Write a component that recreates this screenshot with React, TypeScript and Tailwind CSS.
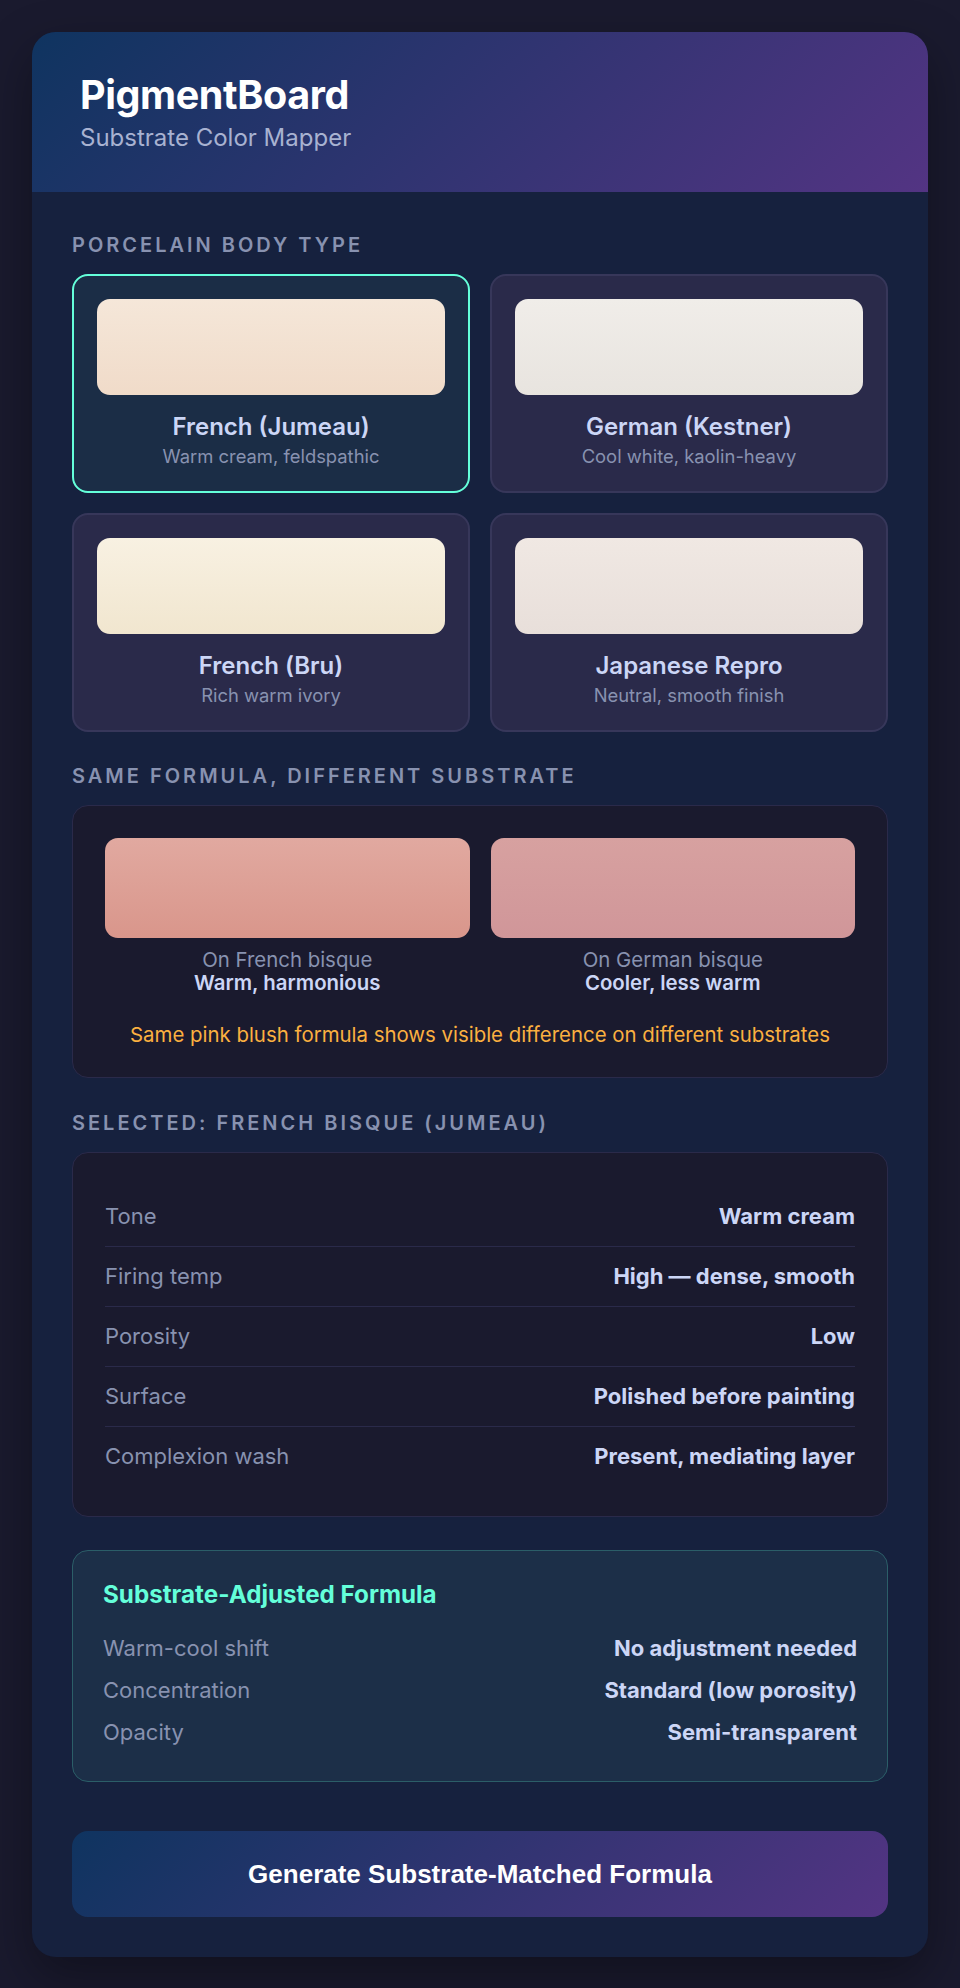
import { useState } from "react";

type Body = {
  id: string;
  name: string;
  desc: string;
  swatch: string;
};

const bodies: Body[] = [
  {
    id: "jumeau",
    name: "French (Jumeau)",
    desc: "Warm cream, feldspathic",
    swatch: "bg-[linear-gradient(180deg,#f5e7d9,#f0dbc9)]",
  },
  {
    id: "kestner",
    name: "German (Kestner)",
    desc: "Cool white, kaolin-heavy",
    swatch: "bg-[linear-gradient(180deg,#f0ede9,#e8e4df)]",
  },
  {
    id: "bru",
    name: "French (Bru)",
    desc: "Rich warm ivory",
    swatch: "bg-[linear-gradient(180deg,#f8f1e2,#f1e6cf)]",
  },
  {
    id: "japanese",
    name: "Japanese Repro",
    desc: "Neutral, smooth finish",
    swatch: "bg-[linear-gradient(180deg,#f0e8e3,#e8dfda)]",
  },
];

const details = [
  ["Tone", "Warm cream"],
  ["Firing temp", "High — dense, smooth"],
  ["Porosity", "Low"],
  ["Surface", "Polished before painting"],
  ["Complexion wash", "Present, mediating layer"],
];

const formula = [
  ["Warm-cool shift", "No adjustment needed"],
  ["Concentration", "Standard (low porosity)"],
  ["Opacity", "Semi-transparent"],
];

function SectionTitle({ children }: { children: string }) {
  return (
    <h2 className="mb-4 text-[20px] font-semibold uppercase leading-[26px] tracking-[0.15em] text-[#8892b0]">
      {children}
    </h2>
  );
}

export default function App() {
  const [selected, setSelected] = useState("jumeau");

  return (
    <div className="min-h-screen bg-[#1a1a2e] p-8 font-['Inter',sans-serif]">
      <div className="overflow-hidden rounded-[24px] bg-[#16213e] shadow-[0_20px_50px_rgba(0,0,0,0.35)]">
        <header className="bg-[linear-gradient(135deg,#0f3460,#533483)] px-12 pt-10 pb-[39px]">
          <h1 className="text-[39.5px] font-bold leading-[46px] tracking-[-0.01em] text-white">
            PigmentBoard
          </h1>
          <p className="mt-[5px] text-[24px] leading-[30px] text-[#a8b2d1]">
            Substrate Color Mapper
          </p>
        </header>

        <main className="p-10">
          <SectionTitle>Porcelain Body Type</SectionTitle>
          <div className="grid grid-cols-2 gap-5">
            {bodies.map((b) => {
              const active = b.id === selected;
              return (
                <button
                  key={b.id}
                  onClick={() => setSelected(b.id)}
                  className={`rounded-2xl border-2 p-[23px] text-center ${
                    active
                      ? "border-[#64ffda] bg-[#1b2d46]"
                      : "border-[#37375a] bg-[#2a2a4a]"
                  }`}
                >
                  <div className={`h-24 rounded-[13px] ${b.swatch}`} />
                  <div className="mt-4 text-[24px] font-semibold leading-[32px] text-[#ccd6f6]">
                    {b.name}
                  </div>
                  <div className="mt-0.5 text-[18.4px] leading-[23px] text-[#8892b0]">
                    {b.desc}
                  </div>
                </button>
              );
            })}
          </div>

          <div className="mt-[31px]">
            <SectionTitle>Same Formula, Different Substrate</SectionTitle>
            <div className="rounded-2xl border border-[#2a2a4a] bg-[#1a1a2e] p-8">
              <div className="grid grid-cols-2 gap-[21px]">
                <div className="text-center">
                  <div className="h-[100px] rounded-[13px] bg-[linear-gradient(180deg,#e1a9a0,#d9968b)]" />
                  <div className="mt-[10px] text-[20.4px] leading-[23px] text-[#8892b0]">
                    On French bisque
                  </div>
                  <div className="text-[20.4px] font-semibold leading-[23px] text-[#ccd6f6]">
                    Warm, harmonious
                  </div>
                </div>
                <div className="text-center">
                  <div className="h-[100px] rounded-[13px] bg-[linear-gradient(180deg,#d7a1a0,#d09699)]" />
                  <div className="mt-[10px] text-[20.4px] leading-[23px] text-[#8892b0]">
                    On German bisque
                  </div>
                  <div className="text-[20.4px] font-semibold leading-[23px] text-[#ccd6f6]">
                    Cooler, less warm
                  </div>
                </div>
              </div>
              <p className="mt-[31px] text-center text-[20.4px] leading-[20px] text-[#fbb040]">
                Same pink blush formula shows visible difference on different substrates
              </p>
            </div>
          </div>

          <div className="mt-8">
            <SectionTitle>Selected: French Bisque (Jumeau)</SectionTitle>
            <div className="rounded-2xl border border-[#2a2a4a] bg-[#1a1a2e] px-8 pt-[34px] pb-[30px]">
              {details.map(([label, value], i) => (
                <div
                  key={label}
                  className={`flex items-center justify-between py-[15px] text-[22px] leading-[29px] ${
                    i < details.length - 1 ? "border-b border-[#2a2a4a]" : ""
                  }`}
                >
                  <span className="text-[#8892b0]">{label}</span>
                  <span className="font-bold text-[#ccd6f6]">{value}</span>
                </div>
              ))}
            </div>
          </div>

          <div className="mt-[33px] rounded-2xl border border-[#2b5e68] bg-[#1c2f48] px-[30px] pt-[30px] pb-[28px]">
            <h3 className="mb-[18px] text-[24.2px] font-bold leading-[28px] text-[#64ffda]">
              Substrate-Adjusted Formula
            </h3>
            {formula.map(([label, value]) => (
              <div
                key={label}
                className="flex items-center justify-between py-[7px] text-[22px] leading-[28px]"
              >
                <span className="text-[#8892b0]">{label}</span>
                <span className="font-bold text-[#ccd6f6]">{value}</span>
              </div>
            ))}
          </div>

          <button className="mt-[49px] flex h-[86px] w-full items-center justify-center rounded-2xl bg-[linear-gradient(135deg,#0f3460,#533483)] font-['Liberation_Sans',Arial,sans-serif] text-[26px] font-bold text-white">
            Generate Substrate-Matched Formula
          </button>
        </main>
      </div>
    </div>
  );
}
